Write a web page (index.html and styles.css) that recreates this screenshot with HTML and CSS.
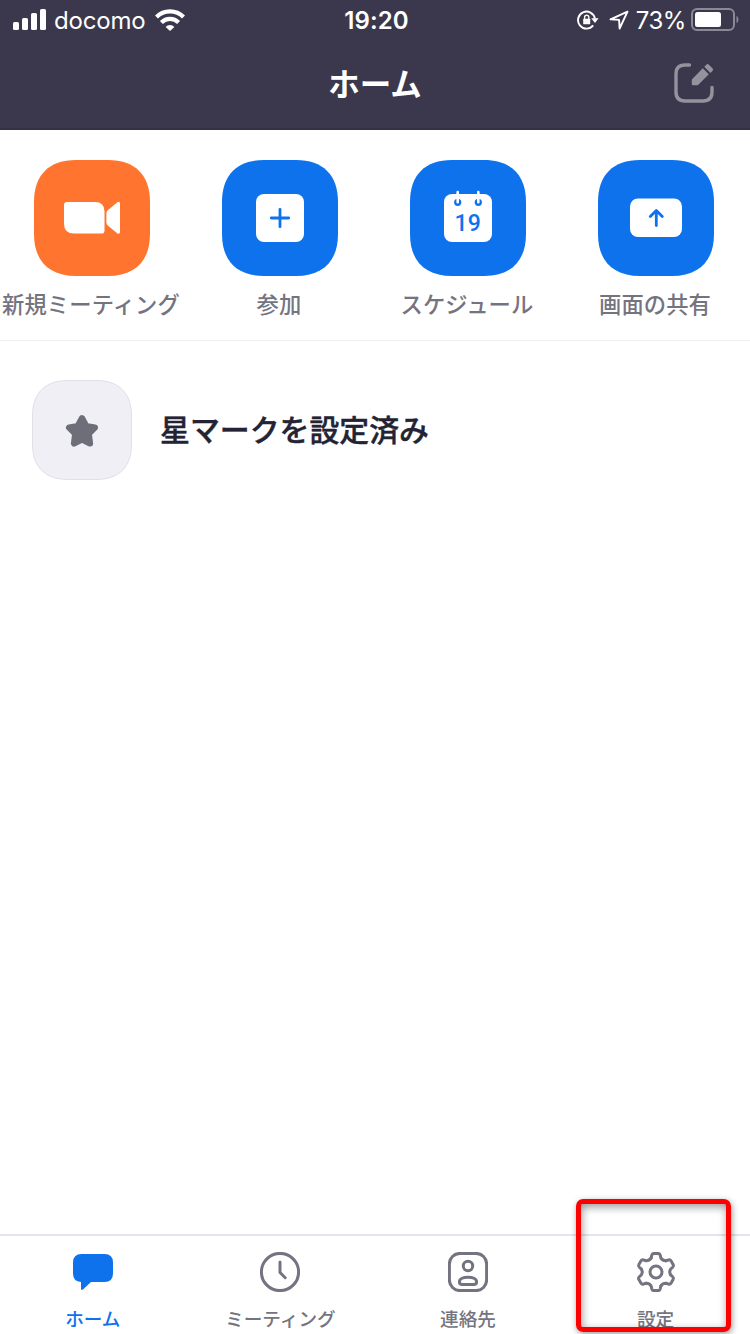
FILE: index.html
```html
<!DOCTYPE html>
<html lang="ja">
<head>
  <meta charset="UTF-8">
  <meta name="viewport" content="width=device-width, initial-scale=1.0">
  <title>ホーム</title>
  <link rel="stylesheet" href="styles.css">
</head>
<body>

  <header class="header">
    <!-- Status bar -->
    <div class="status">
      <div class="status-left">
        <svg class="signal" width="34" height="22" viewBox="0 0 34 22" fill="#fff">
          <rect x="0" y="13" width="6" height="8" rx="1.5"/>
          <rect x="9" y="9" width="6" height="12" rx="1.5"/>
          <rect x="18" y="4" width="6" height="17" rx="1.5"/>
          <rect x="27" y="0" width="6" height="21" rx="1.5"/>
        </svg>
        <span class="carrier">docomo</span>
        <svg class="wifi" width="30" height="22" viewBox="0 0 30 22" fill="none" stroke="#fff" stroke-width="4.2">
          <path d="M1.500 8a19 19 0 0 1 27 0"/>
          <path d="M6.400 13.500a12 12 0 0 1 17.200 0"/>
          <path d="M10.600 17.900a6 6 0 0 1 8.800 0L15 22z" fill="#fff" stroke="none"/>
        </svg>
      </div>
      <div class="time">19:20</div>
      <div class="status-right">
        <svg width="22" height="20" viewBox="0 0 22 20" fill="none" stroke="#fff" stroke-width="1.9">
          <path d="M16.200 15.400A8.500 8.500 0 1 1 17.900 8.500"/>
          <path d="M14.200 8.300h7.400L18 12.900z" fill="#fff" stroke="none"/>
          <rect x="6.200" y="8.700" width="7" height="5.600" rx="0.600" fill="#fff" stroke="none"/>
          <path d="M7.600 9V7.300a2.100 2.100 0 0 1 4.200 0V9" stroke-width="1.400"/>
        </svg>
        <svg class="location" width="20" height="20" viewBox="0 0 20 20" fill="none" stroke="#fff" stroke-width="1.900" stroke-linejoin="round">
          <path d="M18.500 1.700L1.500 9.300l8.600.6.500 8.600z"/>
        </svg>
        <span class="percent">73%</span>
        <svg class="battery" width="49" height="24" viewBox="0 0 49 24">
          <rect x="1" y="1" width="42" height="21" rx="5" fill="none" stroke="#8b8996" stroke-width="2"/>
          <rect x="4" y="4" width="26" height="15" rx="2.5" fill="#fff"/>
          <path d="M45.500 8c2.600 1 2.600 6 0 7z" fill="#8b8996"/>
        </svg>
      </div>
    </div>
    <!-- Title bar -->
    <div class="titlebar">
      <h1>ホーム</h1>
      <svg class="compose" width="42" height="42" viewBox="0 0 42 42" fill="none" stroke="#94929d" stroke-width="3.4" stroke-linecap="round">
        <path d="M16.500 3H12Q3 3 3 12v18q0 9 9 9h18q9 0 9-9v-4.500"/>
        <path d="M20 16.200L29.800 6.200l6 6L25.600 22.500q-.6.700-1.400.7h-4.200q-1.200 0-1.200-1.200V18q0-.8 1.200-1.800z" fill="#94929d" stroke="none"/>
        <path d="M31.300 4.700l2-2q1.300-1.300 2.600 0l3.600 3.600q1.300 1.300 0 2.600l-2.100 2z" fill="#94929d" stroke="none"/>
      </svg>
    </div>
  </header>

  <!-- Actions -->
  <nav class="actions">
    <a class="action">
      <svg width="116" height="116" viewBox="0 0 116 116">
        <path class="tile orange" d="M0 42C0 15 15 0 42 0h32c27 0 42 15 42 42v32c0 27-15 42-42 42H42C15 116 0 101 0 74z"/>
        <path fill="#fff" d="M33 42h28q9.500 0 9.500 9.500V70.700q0 2.800-2.800 2.800H40q-10 0-10-10V45q0-3 3-3z"/>
        <path fill="#fff" d="M83.200 42.400q2.800-1.600 2.800 1.400v28q0 3-2.800 1.400L74 65.700q-1.600-1.400-1.600-3.500v-8.700q0-2.100 1.600-3.500z"/>
      </svg>
      <span>新規ミーティング</span>
    </a>
    <a class="action">
      <svg width="116" height="116" viewBox="0 0 116 116">
        <path class="tile" d="M0 42C0 15 15 0 42 0h32c27 0 42 15 42 42v32c0 27-15 42-42 42H42C15 116 0 101 0 74z"/>
        <rect x="34" y="34" width="48" height="48" rx="8" fill="#fff"/>
        <path class="line" d="M58 49.300v17.400M49.300 58h17.400"/>
      </svg>
      <span>参加</span>
    </a>
    <a class="action">
      <svg width="116" height="116" viewBox="0 0 116 116">
        <path class="tile" d="M0 42C0 15 15 0 42 0h32c27 0 42 15 42 42v32c0 27-15 42-42 42H42C15 116 0 101 0 74z"/>
        <rect x="34" y="34" width="48" height="48" rx="8" fill="#fff"/>
        <circle cx="47.700" cy="42.300" r="3.600" fill="#0e72ed"/>
        <circle cx="68.300" cy="42.300" r="3.600" fill="#0e72ed"/>
        <path d="M47.700 32v10.300M68.300 32v10.300" stroke="#fff" stroke-width="2.600" stroke-linecap="round"/>
        <text class="day" x="57.700" y="70.700" text-anchor="middle">19</text>
      </svg>
      <span>スケジュール</span>
    </a>
    <a class="action">
      <svg width="116" height="116" viewBox="0 0 116 116">
        <path class="tile" d="M0 42C0 15 15 0 42 0h32c27 0 42 15 42 42v32c0 27-15 42-42 42H42C15 116 0 101 0 74z"/>
        <rect x="32" y="38.500" width="52" height="38.500" rx="8" fill="#fff"/>
        <path class="line" d="M58.300 65.500V51M52.300 56.500l6-6 6 6"/>
      </svg>
      <span>画面の共有</span>
    </a>
  </nav>

  <!-- Starred -->
  <main class="content">
    <div class="starred">
      <svg width="100" height="100" viewBox="0 0 100 100">
        <path d="M.5 36C.5 13 13 .5 36 .5h28C87 .5 99.500 13 99.500 36v28C99.500 87 87 99.500 64 99.500H36C13 99.500.5 87 .5 64z" fill="#f0eff5" stroke="#e1e0e8"/>
        <path d="M50 38.300l4.100 7.800 8.700 1.500-6.100 6.200 1.200 9.600-7.900-3.900-7.900 3.900 1.200-9.600-6.100-6.200 8.700-1.500z" fill="#6e6e78" stroke="#6e6e78" stroke-width="6.400" stroke-linejoin="round"/>
      </svg>
      <h2>星マークを設定済み</h2>
    </div>
  </main>

  <!-- Tabs -->
  <nav class="tabs">
    <a class="tab active">
      <svg width="40" height="40" viewBox="0 0 40 40" fill="#0e72ed">
        <path d="M8.500 2h23q8.500 0 8.500 8.500v11q0 8.500-8.500 8.500H18l-8 7.600q-2 1-2-.8V30Q0 29.500 0 21.500v-11Q0 2 8.500 2z"/>
      </svg>
      <span>ホーム</span>
    </a>
    <a class="tab">
      <svg width="40" height="40" viewBox="0 0 40 40">
        <circle cx="20" cy="20" r="18.600"/>
        <path d="M20 10v10.500l5.200 5.200"/>
      </svg>
      <span>ミーティング</span>
    </a>
    <a class="tab">
      <svg width="40" height="40" viewBox="0 0 40 40">
        <rect x="1.400" y="1.400" width="37.200" height="37.200" rx="10.500"/>
        <circle cx="20" cy="14" r="4.700"/>
        <path d="M11.400 30c0-3.200 4-4.800 8.600-4.800s8.600 1.600 8.600 4.800q0 2.500-2.800 2.500H14.200q-2.800 0-2.800-2.500z"/>
      </svg>
      <span>連絡先</span>
    </a>
    <a class="tab">
      <svg width="40" height="40" viewBox="-20 -20 40 40">
        <defs>
          <path id="tooth" d="M-4.800-14.200L-4.200-16.800Q-3.700-18.600-2-18.600H2Q3.700-18.600 4.200-16.800L4.800-14.200Q6.400-11.100 9.900-11.260"/>
        </defs>
        <use href="#tooth"/>
        <use href="#tooth" transform="rotate(60)"/>
        <use href="#tooth" transform="rotate(120)"/>
        <use href="#tooth" transform="rotate(180)"/>
        <use href="#tooth" transform="rotate(240)"/>
        <use href="#tooth" transform="rotate(300)"/>
        <circle r="6"/>
      </svg>
      <span>設定</span>
    </a>
    <div class="highlight"></div>
  </nav>

</body>
</html>
```

FILE: styles.css
```css
* {
    box-sizing: border-box;
}

body {
    display: flex;
    flex-direction: column;
    width: 750px;
    height: 1334px;
    margin: 0;
    overflow: hidden;
    background-color: #fff;
    font-family: Inter, "Noto Sans CJK JP", sans-serif;
    color: #747480;
}

svg {
    display: block;
    flex: none;
}

/* Header */
.header {
    height: 130px;
    background-color: #3b384d;
    border-bottom: 2px solid #343145;
    color: #fff;
}

.status {
    display: grid;
    grid-template-columns: 1fr auto 1fr;
    align-items: center;
    height: 40px;
    padding: 0 10px 0 13px;
    font-size: 24px;
    line-height: 38px;
}

.status span,
.time {
    padding-top: 2px;
}

.status-left,
.status-right {
    display: flex;
    align-items: center;
}

.status-right {
    justify-content: flex-end;
}

.carrier {
    margin-left: 7px;
    letter-spacing: -0.2px;
}

.wifi {
    margin-left: 10px;
}

.time {
    font-weight: 600;
    letter-spacing: 0.1px;
}

.location {
    margin-left: 10px;
}

.percent {
    margin: 0 5px 0 7px;
    letter-spacing: -0.4px;
}

.titlebar {
    display: grid;
    grid-template-columns: 1fr auto 1fr;
    align-items: center;
    height: 86px;
    padding: 0 35px;
}

.titlebar h1 {
    grid-column: 2;
    margin: 3px 0 0;
    font-size: 31.5px;
    line-height: 48px;
    font-weight: 700;
}

.compose {
    justify-self: end;
}

/* Actions */
.actions {
    display: grid;
    grid-template-columns: repeat(4, 188px);
    height: 211px;
    margin-left: -2px;
    padding-top: 30px;
    border-bottom: 1px solid #ededf2;
}

.action {
    display: flex;
    flex-direction: column;
    align-items: center;
    font-size: 22.3px;
    font-weight: 500;
    white-space: nowrap;
}

.action span {
    margin-top: 13px;
    margin-right: 2px;
    line-height: 32px;
    letter-spacing: 0.1px;
}

.tile {
    fill: #0e72ed;
}

.orange {
    fill: #ff742e;
}

.line {
    fill: none;
    stroke: #0e72ed;
    stroke-width: 2.8;
    stroke-linecap: round;
    stroke-linejoin: round;
}

.day {
    fill: #0e72ed;
    font-family: Roboto, sans-serif;
    font-size: 23px;
    font-weight: 500;
}

/* Starred */
.content {
    flex: 1;
    padding: 39px 32px;
}

.starred {
    display: flex;
    align-items: center;
    gap: 28px;
}

.starred h2 {
    margin: 0;
    font-size: 29.9px;
    line-height: 44px;
    font-weight: 500;
    color: #232333;
    -webkit-text-stroke: 0.4px #232333;
}

/* Tabs */
.tabs {
    position: relative;
    display: grid;
    grid-template-columns: repeat(4, 187.6px);
    height: 100px;
    margin-left: -1px;
    padding-top: 16px;
    border-top: 2px solid #e4e4ed;
}

.tab {
    display: flex;
    flex-direction: column;
    align-items: center;
    font-size: 18.6px;
    font-weight: 500;
}

.tab svg {
    fill: none;
    stroke: #747480;
    stroke-width: 3;
    stroke-linecap: round;
    stroke-linejoin: round;
}

.tab span {
    margin-top: 13px;
    line-height: 28px;
}

.active {
    color: #0e72ed;
}

.tab.active svg {
    fill: #0e72ed;
    stroke: none;
}

.highlight {
    position: absolute;
    top: -37px;
    left: 577px;
    width: 155px;
    height: 133px;
    border: 5px solid #ff0000;
    border-radius: 7px;
    box-shadow: 1px 2px 6px rgba(0, 0, 0, 0.4), inset 1px 3px 9px rgba(0, 0, 0, 0.4);
}
```
